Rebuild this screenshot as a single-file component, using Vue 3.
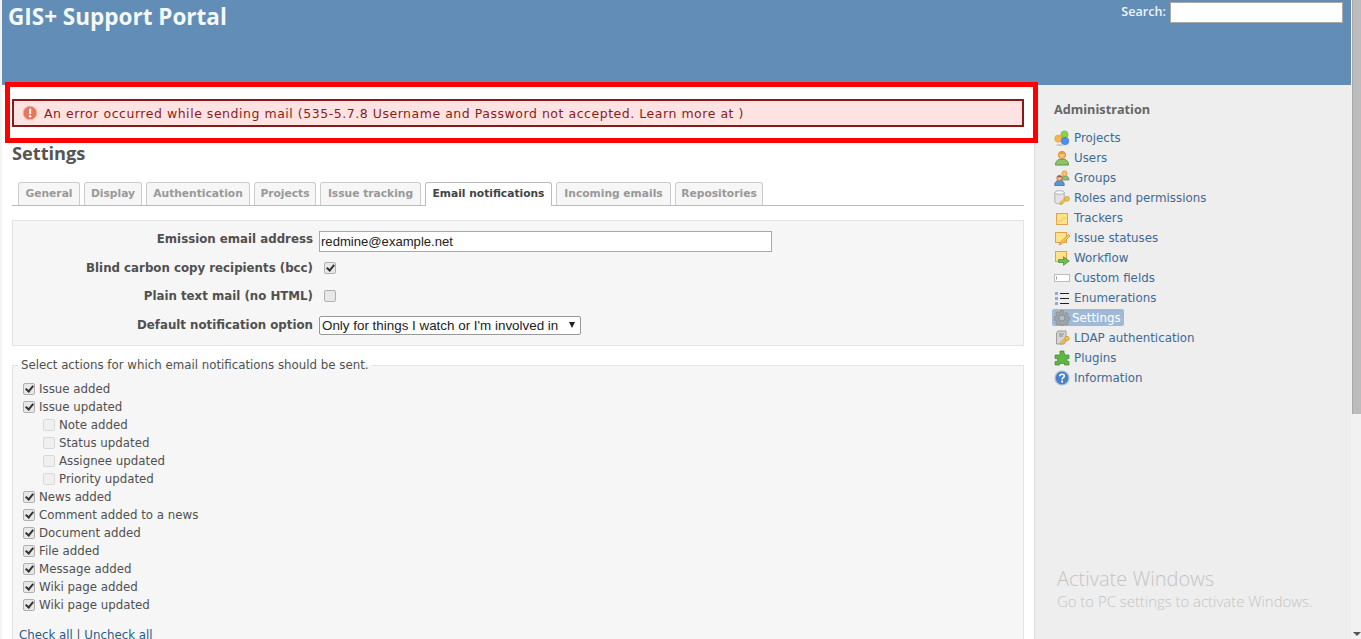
<script setup>
const tabs = [
  { label: 'General', width: 62 }, { label: 'Display', width: 58 }, { label: 'Authentication', width: 104 },
  { label: 'Projects', width: 62 }, { label: 'Issue tracking', width: 101 },
  { label: 'Email notifications', width: 127, active: true },
  { label: 'Incoming emails', width: 115 }, { label: 'Repositories', width: 88 }
]
const actions = [
  { label: 'Issue added', on: true },
  { label: 'Issue updated', on: true },
  { label: 'Note added', sub: true },
  { label: 'Status updated', sub: true },
  { label: 'Assignee updated', sub: true },
  { label: 'Priority updated', sub: true },
  { label: 'News added', on: true },
  { label: 'Comment added to a news', on: true },
  { label: 'Document added', on: true },
  { label: 'File added', on: true },
  { label: 'Message added', on: true },
  { label: 'Wiki page added', on: true },
  { label: 'Wiki page updated', on: true }
]
</script>

<template>
  <div class="page">
    <div class="gutter"></div>
    <div class="shell">
      <header class="top">
        <h1 class="brand">GIS+ Support Portal</h1>
        <label class="search">Search: <input class="search-input" type="text" /></label>
      </header>
      <div class="body">
        <main class="content">
          <div class="flash">
            <svg class="ico" viewBox="0 0 16 16" width="16" height="16">
              <circle cx="8" cy="8" r="6.8" fill="#e8765c" stroke="#f0b09c" stroke-width="1" />
              <rect x="7" y="3.6" width="2.2" height="5.6" rx="1" fill="#fff" />
              <circle cx="8.1" cy="11.3" r="1.2" fill="#fff" />
            </svg>
            <span class="flash-text">An error occurred while sending mail (535-5.7.8 Username and Password not accepted. Learn more at )</span>
          </div>
          <h2 class="title">Settings</h2>
          <nav class="tabs">
            <a v-for="t in tabs" :key="t.label" class="tab" :class="{ active: t.active }" :style="{ width: t.width + 'px' }">{{ t.label }}</a>
          </nav>
          <section class="box">
            <div class="row">
              <span class="lbl">Emission email address</span>
              <input class="mail" type="text" value="redmine@example.net" />
            </div>
            <div class="row">
              <span class="lbl">Blind carbon copy recipients (bcc)</span>
              <input class="cb cb-form" type="checkbox" checked />
            </div>
            <div class="row">
              <span class="lbl">Plain text mail (no HTML)</span>
              <input class="cb cb-form" type="checkbox" />
            </div>
            <div class="row">
              <span class="lbl">Default notification option</span>
              <span class="select-wrap">
                <select class="select"><option>Only for things I watch or I'm involved in</option></select>
              </span>
            </div>
          </section>
          <fieldset class="actions">
            <legend class="legend">Select actions for which email notifications should be sent.</legend>
            <label v-for="a in actions" :key="a.label" class="action" :class="{ sub: a.sub }">
              <input class="cb" type="checkbox" :checked="a.on" :disabled="a.sub" />{{ a.label }}
            </label>
            <p class="check-links"><a>Check all</a> | <a>Uncheck all</a></p>
          </fieldset>
        </main>
        <aside class="side">
          <h3 class="side-title">Administration</h3>
          <a class="item">
            <svg class="ico" viewBox="0 0 16 16" width="16" height="16">
              <circle cx="10.5" cy="4.5" r="3.6" fill="#8fd14f" stroke="#6db030" stroke-width=".6" />
              <circle cx="4.3" cy="8.6" r="3.6" fill="#f8b444" stroke="#e89a2c" stroke-width=".6" />
              <circle cx="11" cy="11" r="3.8" fill="#4f8fea" stroke="#3a74c8" stroke-width=".6" />
              <ellipse cx="6" cy="15" rx="4" ry=".8" fill="#bbb" />
            </svg>Projects
          </a>
          <a class="item">
            <svg class="ico" viewBox="0 0 16 16" width="16" height="16">
              <path d="M1.5 15c0-4 2.5-6 6.500-6s6.500 2 6.500 6z" fill="#8cc46a" stroke="#5c9440" />
              <circle cx="8" cy="5" r="3.600" fill="#f6c27a" stroke="#d98a2e" />
              <path d="M4.500 4.500C5 1 11 1 11.500 4.500 9 3.500 7 3.500 4.500 4.500z" fill="#e89a2c" />
            </svg>Users
          </a>
          <a class="item">
            <svg class="ico" viewBox="0 0 16 16" width="16" height="16">
              <path d="M7 10c0-3 1.500-4 4-4s4 1 4 4z" fill="#8cc46a" stroke="#5c9440" stroke-width=".7" />
              <circle cx="10.500" cy="3.500" r="2.600" fill="#f6c27a" stroke="#d98a2e" stroke-width=".7" />
              <path d="M.7 15.500c0-4 2-5 4.800-5s4.800 1 4.800 5z" fill="#5d93d8" stroke="#35659f" stroke-width=".7" />
              <circle cx="5.500" cy="8" r="2.700" fill="#f3bfa0" stroke="#a8583a" stroke-width=".7" />
              <path d="M3 7.500C3.500 5 7.500 5 8 7.500 6 7 5 7 3 7.500z" fill="#a8583a" />
            </svg>Groups
          </a>
          <a class="item">
            <svg class="ico" viewBox="0 0 16 16" width="16" height="16">
              <path d="M.8 2.500v9.500c0 2.300 9.400 2.300 9.400 0V2.500z" fill="#e2e2e2" stroke="#9a9a9a" stroke-width=".7" />
              <ellipse cx="5.500" cy="2.500" rx="4.700" ry="1.800" fill="#fafafa" stroke="#9a9a9a" stroke-width=".7" />
              <circle cx="13" cy="8.800" r="2.400" fill="#f3c24e" stroke="#c6932a" stroke-width=".7" />
              <path d="M11.500 10.500 7 15l-1.200-1.200 1-.8-.6-.7 4.200-3.600z" fill="#f3c24e" stroke="#c6932a" stroke-width=".6" />
            </svg>Roles and permissions
          </a>
          <a class="item">
            <svg class="ico" viewBox="0 0 16 16" width="16" height="16">
              <rect x="2.500" y="3.500" width="11" height="11" fill="#fbe38a" stroke="#e2a24c" />
              <path d="M3 14v-3h5V8h5.500" fill="none" stroke="#f3c65d" />
            </svg>Trackers
          </a>
          <a class="item">
            <svg class="ico" viewBox="0 0 16 16" width="16" height="16">
              <rect x="1.500" y="2.500" width="11" height="10" fill="#fbe38a" stroke="#e2a24c" />
              <path d="M14.500 4.500 7 11.500 5 15l3.500-1.500L16 6z" fill="#f7c65a" stroke="#c98a2e" stroke-width=".7" />
            </svg>Issue statuses
          </a>
          <a class="item">
            <svg class="ico" viewBox="0 0 16 16" width="16" height="16">
              <rect x="1.500" y="1.500" width="11" height="10" fill="#fbe38a" stroke="#e2a24c" />
              <path d="M4.500 9.500h5V6.800l5.800 4.200-5.800 4.300v-2.800h-5z" fill="#6fbf4f" stroke="#3f8a2c" stroke-width=".7" />
            </svg>Workflow
          </a>
          <a class="item">
            <svg class="ico" viewBox="0 0 16 16" width="16" height="16">
              <rect x=".5" y="4.500" width="15" height="7" fill="#fff" stroke="#bdbdbd" />
              <path d="M2.500 6.500v3" stroke="#999" />
            </svg>Custom fields
          </a>
          <a class="item">
            <svg class="ico" viewBox="0 0 16 16" width="16" height="16">
              <rect x="1" y="2" width="3" height="3" fill="#8fa8d4" />
              <rect x="1" y="7" width="3" height="3" fill="#8fa8d4" />
              <rect x="1" y="12" width="3" height="3" fill="#8fa8d4" />
              <path d="M6 3.500h9M6 8.500h9M6 13.500h9" stroke="#222" />
            </svg>Enumerations
          </a>
          <a class="item selected">
            <svg class="ico" viewBox="0 0 16 16" width="16" height="16">
              <path d="M8 .6 9.200 .8l.4 2.100 1.300.6 1.800-1.100 1.700 1.700-1.100 1.800.6 1.300 2.100.4v2.400l-2.100.4-.6 1.300 1.100 1.800-1.700 1.700-1.800-1.100-1.300.6-.4 2.100H6.800l-.4-2.100-1.300-.6-1.800 1.100-1.700-1.700 1.100-1.800-.6-1.300-2.100-.4V6.800l2.100-.4.6-1.300-1.100-1.800 1.700-1.700 1.800 1.100 1.300-.6.4-2.100z" fill="#a4a4a4" stroke="#777" stroke-width=".5" />
              <circle cx="8" cy="8" r="3.200" fill="#a9bfd8" stroke="#777" stroke-width=".7" />
            </svg><span class="selected-text">Settings</span>
          </a>
          <a class="item">
            <svg class="ico" viewBox="0 0 16 16" width="16" height="16">
              <path d="M2.500 3 4 1h8v10l-2 3H2.500z" fill="#d4d4d4" stroke="#8a8a8a" stroke-width=".8" />
              <path d="M5 4h5M5 6h4" stroke="#8a8a8a" />
              <circle cx="13" cy="8.500" r="2.200" fill="#f3c24e" stroke="#c6932a" stroke-width=".7" />
              <path d="M11.500 10.200 7 14.800l-1-1 1-.8-.6-.7 4-3.600z" fill="#f3c24e" stroke="#c6932a" stroke-width=".6" />
            </svg>LDAP authentication
          </a>
          <a class="item">
            <svg class="ico" viewBox="0 0 16 16" width="16" height="16">
              <path d="M6 1h4v2.500h.6V5H15v3.500h-2v3h2V15h-4.500v-1.500h-5V15H1v-3.500h2.500v-3H1V5h5z" fill="#62b44a" stroke="#3f8a2c" stroke-width=".7" />
            </svg>Plugins
          </a>
          <a class="item">
            <svg class="ico" viewBox="0 0 16 16" width="16" height="16">
              <circle cx="8" cy="8" r="7" fill="#4a80c8" stroke="#a8c0e0" stroke-width="1.200" />
              <path d="M5.800 6.200C5.900 3.600 10.300 3.600 10.300 6 10.300 7.600 8.100 7.700 8.100 9.400" fill="none" stroke="#fff" stroke-width="1.600" />
              <circle cx="8.100" cy="11.600" r="1.100" fill="#fff" />
            </svg>Information
          </a>
          <div class="activate">
            <div class="activate-big">Activate Windows</div>
            <div class="activate-small">Go to PC settings to activate Windows.</div>
          </div>
        </aside>
      </div>
    </div>
    <div class="scrollbar">
      <div class="thumb"></div>
      <div class="arrow"></div>
    </div>
    <div class="callout"></div>
  </div>
</template>

<style>
html, body { margin: 0; height: 100%; overflow: hidden; }
</style>

<style scoped>
.page {
  position: relative;
  display: flex;
  height: 639px;
  overflow: hidden;
  background: #f4f4f4;
  font-family: "DejaVu Sans", Verdana, sans-serif;
  font-size: 11.8px;
  color: #505050;
}
.gutter { width: 2px; flex: none; }
.shell { flex: 1; min-width: 0; display: flex; flex-direction: column; }
.top {
  height: 85px;
  flex: none;
  box-sizing: border-box;
  background: #628db6;
  color: #fff;
  display: flex;
  justify-content: space-between;
  align-items: flex-start;
  padding: 2px 8px 0 6px;
}
.brand { margin: 0; font: 700 22.500px/30px "Open Sans", sans-serif; color: #f4f8fb; }
.search { display: flex; align-items: flex-start; gap: 4px; font: 600 12.600px/19px "Open Sans", sans-serif; height: 21px; color: #eef3f8; }
.search-input { width: 173px; height: 21px; box-sizing: border-box; border: 1px solid #a9a9a9; background: #fff; padding: 0; margin: 0; }
.body { flex: 1; display: flex; min-height: 0; }
.content {
  width: 1032px;
  flex: none;
  box-sizing: border-box;
  background: #fff;
  padding: 14px 10px 0;
}
.flash {
  height: 28px;
  box-sizing: border-box;
  display: flex;
  align-items: center;
  gap: 6px;
  padding-left: 8px;
  border: 2px solid #8a1a1a;
  background: #ffe3e3;
  color: #8a1c1c;
  white-space: nowrap;
}
.flash-text { font-size: 12.500px; letter-spacing: .53px; padding-top: 1px; }
.flash .ico { flex: none; }
.title { margin: 14px 0 0; font: 700 18.200px/24px "Open Sans", sans-serif; color: #555; }
.tabs {
  margin-top: 17px;
  height: 23px;
  padding-left: 6px;
  display: flex;
  gap: 4px;
  border-bottom: 1px solid #bbb;
  box-sizing: content-box;
}
.tab {
  box-sizing: border-box;
  height: 23px;
  text-align: center;
  line-height: 22px;
  font-weight: 700;
  font-size: 10.700px;
  color: #999;
  background: #f6f6f6;
  border: 1px solid #ccc;
  border-bottom: none;
  border-radius: 3px 3px 0 0;
  white-space: nowrap;
}
.tab.active { height: 24px; color: #444; background: #fff; border-color: #bbb; }
.box {
  margin-top: 14px;
  height: 126px;
  box-sizing: border-box;
  background: #f6f6f6;
  border: 1px solid #e4e4e4;
  padding-top: 4px;
  display: flex;
  flex-direction: column;
}
.row { display: flex; align-items: center; height: 28.500px; flex: none; }
.lbl { width: 300px; text-align: right; font-weight: 700; margin-right: 6px; flex: none; }
.mail {
  width: 453px; height: 21px; box-sizing: border-box; margin: 5px 0 0;
  border: 1px solid #a9a9a9; padding: 0 1px; background: #fff; color: #222;
  font: 13.100px "Liberation Sans", Arial, sans-serif;
}
.select-wrap { position: relative; display: block; width: 262px; height: 19px; margin-top: 2px; }
.select {
  width: 262px; height: 19px; box-sizing: border-box; appearance: none; display: block;
  border: 1px solid #999; border-radius: 2px; background: #fff; color: #222; padding: 0 2px;
  font: 13.400px "Liberation Sans", Arial, sans-serif;
}
.select-wrap::after {
  content: ""; position: absolute; right: 6px; top: 6px;
  border: 3.500px solid transparent; border-top: 6px solid #222; border-bottom: 0;
}
.cb {
  appearance: none;
  box-sizing: border-box;
  width: 12px; height: 12px; margin: 0 4px 0 0; flex: none; position: relative;
  border: 1px solid #b0b0b0; border-radius: 2px; background: #e8e8e8;
}
.cb:checked::after {
  content: ""; position: absolute; left: 3px; top: 0; width: 3px; height: 6px;
  border: solid #333; border-width: 0 2px 2px 0; transform: rotate(40deg);
}
.cb:disabled { border-color: #d8d8d8; background: #f0f0f0; }
.cb-form { margin-left: 5px; }
.actions {
  margin: 12px 0 0;
  padding: 8px 0 0 10px;
  background: #f6f6f6;
  border: 1px solid #e4e4e4;
  border-bottom: 0;
  min-height: 280px;
  box-sizing: border-box;
}
.legend { margin-left: -5px; padding: 0 3px; line-height: 14px; }
.action { display: flex; align-items: center; height: 18px; }
.action.sub { padding-left: 20px; }
.check-links { margin: 15px 0 0 -4px; line-height: 12px; }
.check-links a { color: #2a5a8a; }
.side {
  flex: 1;
  position: relative;
  box-sizing: border-box;
  background: #eee;
  border-left: 1px solid #e0e0e0;
  padding: 14px 0 0 19px;
  font-size: 11.850px;
}
.side-title { margin: 0 0 9px; font: 700 12.700px/20px "Open Sans", sans-serif; color: #666; }
.item { display: flex; align-items: center; height: 20px; color: #3e6a96; }
.item .ico { margin-right: 4px; flex: none; }
.item.selected { position: relative; }
.item.selected::before {
  content: ""; position: absolute; left: -2px; top: 1px; width: 72px; height: 17px;
  background: #a0bad6; border-radius: 2px;
}
.item.selected .ico { position: relative; margin-right: 2px; }
.selected-text { position: relative; color: #fff; }
.activate { position: absolute; left: 22px; top: 480px; font-family: "Open Sans", sans-serif; font-weight: 300; color: #c4c4c4; }
.activate-big { font-size: 20px; line-height: 27px; }
.activate-small { font-size: 14.900px; line-height: 19px; }
.scrollbar { width: 10px; flex: none; position: relative; background: #f1f1f1; }
.thumb { height: 414px; margin-left: 1px; background: #bcbcbc; border-left: 1px solid #a8a8a8; box-sizing: border-box; }
.arrow {
  position: absolute; left: 2px; bottom: 3px;
  border: 4px solid transparent; border-top: 4px solid #555; border-bottom: 0;
}
.callout {
  position: absolute; left: 5px; top: 82px; width: 1033px; height: 61px;
  box-sizing: border-box; border: 5px solid #f00; pointer-events: none;
}
</style>
